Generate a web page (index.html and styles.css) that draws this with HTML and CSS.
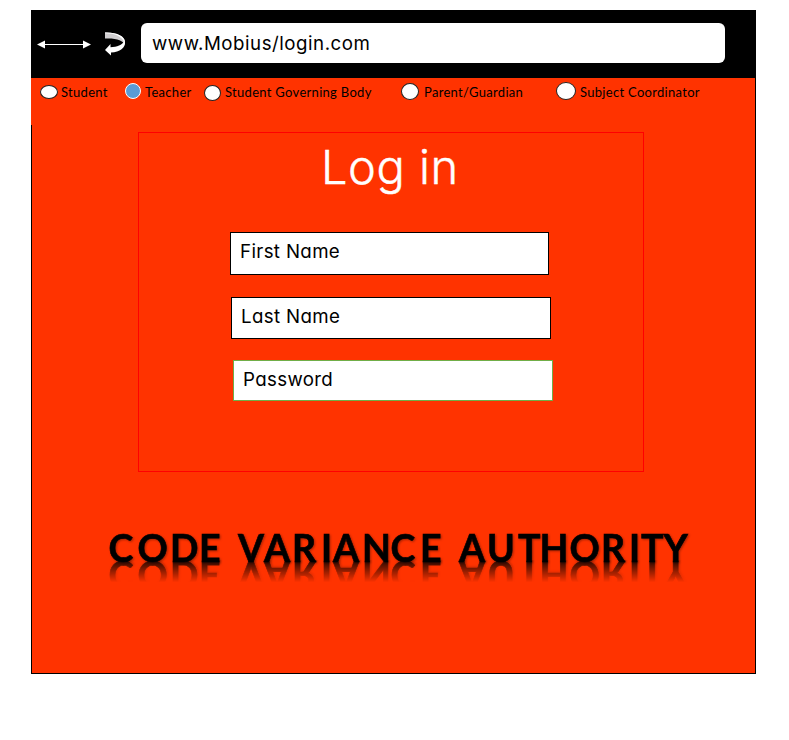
FILE: index.html
```html
<!DOCTYPE html>
<html lang="en">
<head>
<meta charset="utf-8">
<title>Log in</title>
<link rel="stylesheet" href="styles.css">
</head>
<body>
<div class="window">
  <header class="toolbar">
    <svg class="nav-arrows" width="54" height="10" viewBox="0 0 54 10"><path d="M7 5.500H47" stroke="#fff"/><path d="M0 5.500L8 1.500V9.500ZM54 5.500L46 1.500V9.500Z" fill="#fff"/></svg>
    <svg class="reload" width="21" height="24" viewBox="0 0 21 24"><path d="M0 0.500C11 0 20 4 20 10V13C18 8.500 12 6 0 6.500Z" fill="#d0ced0"/><path d="M0 0.500C11 0 20 4 20 10C20.500 16 15 20 6 20.500V23.500L0 18L5.500 12V15.200C12 15 17.500 13 18.700 9.500C17 4.500 10 1.200 0 1.200Z" fill="#fff"/></svg>
    <div class="address"><span>www.Mobius/login.com</span></div>
  </header>
  <main class="page">
    <nav class="roles">
      <label class="role student"><i></i><span>Student</span></label>
      <label class="role teacher"><i></i><span>Teacher</span></label>
      <label class="role body"><i></i><span>Student Governing Body</span></label>
      <label class="role parent"><i></i><span>Parent/Guardian</span></label>
      <label class="role subject"><i></i><span>Subject Coordinator</span></label>
    </nav>
    <section class="login">
      <h1>Log in</h1>
      <div class="field first"><span>First Name</span></div>
      <div class="field last"><span>Last Name</span></div>
      <div class="field password"><span>Password</span></div>
    </section>
    <svg class="wordmark" width="600" height="31" viewBox="0 0 600 31">
      <text y="29.500" x="7.500 36.500 69 98">CODE</text>
      <text y="29.500" x="137 163 191 220 232 261 289.500 319">VARIANCE</text>
      <text y="29.500" x="358 386 417 438.500 468.500 500 528 540 562.500">AUTHORITY</text>
    </svg>
  </main>
</div>
</body>
</html>
```
FILE: styles.css
```css
* { box-sizing: border-box; }
body { margin: 0; background: #fff; font-family: Inter, sans-serif; color: #000; }
.window { width: 725px; height: 664px; margin: 10px 0 0 31px; display: flex; flex-direction: column; }
.toolbar { height: 68px; background: #000; display: flex; align-items: flex-start; }
.nav-arrows { margin: 29px 0 0 6px; }
.reload { margin: 22px 0 0 14px; }
.address { margin: 13px 0 0 15px; width: 584px; height: 40px; border-radius: 6px; background: #fff; padding-left: 11px; font-size: 18.7px; line-height: 41px; letter-spacing: .52px; white-space: nowrap; }
.page { flex: 1; background: linear-gradient(#ff3300 47px, #000 47px) 0 0 / 1px 100% no-repeat #ff3300; border: solid #000; border-width: 0 1px 1px 0; padding-left: 1px; display: flex; flex-direction: column; }
.roles { height: 54px; display: flex; align-items: flex-start; font: 13px/16px Lato, sans-serif; letter-spacing: .3px; }
.role { display: flex; align-items: flex-start; white-space: nowrap; }
.role i { flex: none; background: #fff; border: 1px solid #222; border-radius: 50%; }
.role span { margin-top: 6px; }
.student { width: 85px; padding-left: 8px; }
.student i { width: 18px; height: 14px; margin: 7px 3px 0 0; }
.teacher { width: 79px; padding-left: 8px; }
.teacher i { width: 16px; height: 16px; margin: 5px 4px 0 0; background: #5b9bd5; border-color: #fff; }
.body { width: 197px; padding-left: 8px; }
.body i { width: 17px; height: 16px; margin: 7px 4px 0 0; }
.parent { width: 155px; padding-left: 8px; }
.parent i { width: 18px; height: 17px; margin: 5px 5px 0 0; }
.subject { padding-left: 8px; }
.subject i { width: 20px; height: 18px; margin: 4px 4px 0 0; }
.login { width: 506px; height: 340px; margin-left: 106px; border: 1px solid #f00; display: flex; flex-direction: column; }
h1 { margin: 0; padding-left: 182px; height: 99px; font-size: 47px; font-weight: 300; letter-spacing: .5px; line-height: 67px; color: #fff; white-space: nowrap; -webkit-text-stroke: .4px #fff; }
.field { flex: none; background: #fff; border: 1px solid #000; padding-left: 9px; font-size: 18.7px; line-height: 37px; letter-spacing: .35px; white-space: nowrap; font-feature-settings: "cv11"; }
.first { width: 319px; height: 43px; margin-left: 91px; }
.last { width: 320px; height: 42px; margin: 22px 0 0 92px; }
.password { width: 320px; height: 41px; margin: 21px 0 0 94px; border-color: #70ad47; }
.wordmark { margin: 60px 0 0 69px; overflow: visible; font: 700 37.5px Lato, sans-serif; stroke: #000; stroke-width: .6px; filter: drop-shadow(1px 1px 1px rgba(0,0,0,.35)); -webkit-box-reflect: below -3px linear-gradient(transparent 28%, rgba(0,0,0,.85)); }
```
